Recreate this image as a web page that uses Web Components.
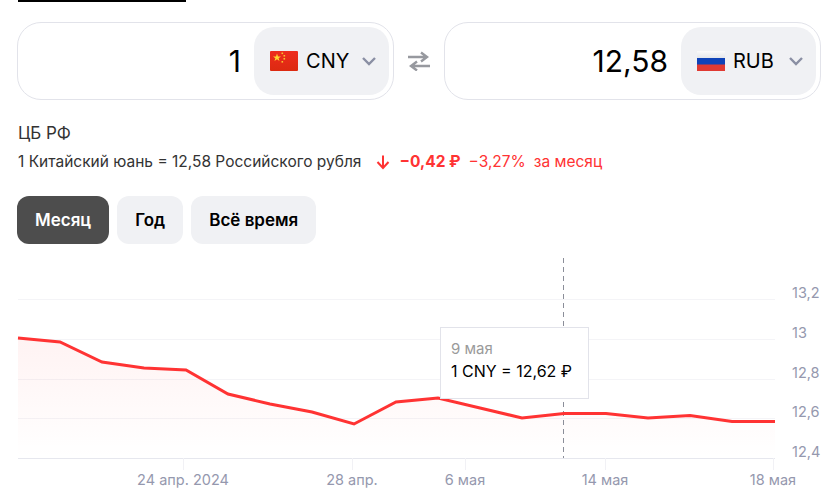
<!DOCTYPE html>
<html lang="ru">
<head>
<meta charset="utf-8">
<title>CNY RUB</title>
<style>
    html, body {
        margin: 0;
        background: #fff;
        font-family: Inter, Roboto, "DejaVu Sans", sans-serif;
        color: #000;
        overflow: hidden;
    }
    .page {
        width: 837px;
        height: 502px;
        box-sizing: border-box;
        padding: 0 16px 0 17px;
    }
</style>
</head>
<body>
<div class="page">
    <top-rule></top-rule>
    <fx-converter>
        <fx-field value="1" code="CNY" flag="cn"></fx-field>
        <fx-swap></fx-swap>
        <fx-field value="12,58" code="RUB" flag="ru"></fx-field>
    </fx-converter>
    <fx-rate></fx-rate>
    <fx-tabs></fx-tabs>
    <fx-chart></fx-chart>
</div>
<script>
const FLAGS = {
    cn: `<svg width="28" height="20" viewBox="0 0 28 20">
            <defs><linearGradient id="r" x1="0" y1="0" x2="0" y2="1"><stop offset="0" stop-color="#ee2c1e"/><stop offset="1" stop-color="#dc2a10"/></linearGradient></defs>
            <rect width="28" height="20" rx="1" fill="url(#r)"/>
            <polygon fill="#ffd52e" points="7,2.6 8,5.4 11,5.4 8.6,7.2 9.5,10 7,8.3 4.5,10 5.4,7.2 3,5.4 6,5.4"/>
            <rect x="11.5" y="1.5" width="1.6" height="1.6" fill="#f9c22e"/>
            <rect x="13.5" y="4" width="1.6" height="1.6" fill="#f9c22e"/>
            <rect x="13.5" y="7" width="1.6" height="1.6" fill="#f9c22e"/>
            <rect x="11.5" y="10" width="1.6" height="1.6" fill="#f9c22e"/>
        </svg>`,
    ru: `<svg width="28" height="20" viewBox="0 0 28 20">
            <defs><linearGradient id="w" x1="0" y1="0" x2="0" y2="1"><stop offset="0" stop-color="#fafafa"/><stop offset="1" stop-color="#e4e6ea"/></linearGradient></defs>
            <rect width="28" height="7" fill="url(#w)"/>
            <rect y="7" width="28" height="7" fill="#0f43b8"/>
            <rect y="13.5" width="28" height="6.5" fill="#e03a32"/>
        </svg>`
};

class TopRule extends HTMLElement {
    constructor() {
        super();
        this.attachShadow({ mode: 'open' });
        this.shadowRoot.innerHTML = `
            <style>
                :host {
                    display: block;
                    width: 168px;
                    height: 2px;
                    margin-left: 1px;
                    background: #000;
                }
            </style>
        `;
    }
}

class FxConverter extends HTMLElement {
    constructor() {
        super();
        this.attachShadow({ mode: 'open' });
        this.shadowRoot.innerHTML = `
            <style>
                :host {
                    display: flex;
                    align-items: center;
                    margin-top: 20px;
                }
            </style>
            <slot></slot>
        `;
    }
}

class FxField extends HTMLElement {
    connectedCallback() {
        if (this.shadowRoot) return;
        this.attachShadow({ mode: 'open' });
        this.shadowRoot.innerHTML = `
            <style>
                :host {
                    display: flex;
                    align-items: center;
                    justify-content: flex-end;
                    box-sizing: border-box;
                    width: 378px;
                    height: 78px;
                    padding: 4px;
                    border: 1px solid #e2e3ea;
                    border-radius: 24px;
                }
                .value {
                    font-size: 30px;
                    line-height: 68px;
                    margin-right: 13px;
                    font-weight: 400;
                }
                .pick {
                    display: flex;
                    align-items: center;
                    box-sizing: border-box;
                    width: 135px;
                    height: 68px;
                    padding-left: 16px;
                    border-radius: 20px;
                    background: #f0f1f4;
                }
                svg { display: block; flex: none; }
                .code {
                    font-size: 20px;
                    margin-left: 8px;
                    font-weight: 400;
                    width: 50px;
                }
                .chev { margin-left: 5px; }
            </style>
            <div class="value">${this.getAttribute('value')}</div>
            <div class="pick">
                ${FLAGS[this.getAttribute('flag')]}
                <span class="code">${this.getAttribute('code')}</span>
                <svg class="chev" width="16" height="10" viewBox="0 0 16 10"><path d="M2 2l6 6 6-6" fill="none" stroke="#8a8fa3" stroke-width="2.4"/></svg>
            </div>
        `;
    }
}

class FxSwap extends HTMLElement {
    constructor() {
        super();
        this.attachShadow({ mode: 'open' });
        this.shadowRoot.innerHTML = `
            <style>
                :host {
                    display: flex;
                    justify-content: center;
                    width: 50px;
                }
                svg { display: block; }
            </style>
            <svg width="24" height="20" viewBox="0 0 24 20">
                <path d="M1 6h18M14 1.5l6 4.5-6 4.5" fill="none" stroke="#97999f" stroke-width="2.4"/>
                <path d="M23 15H5M10 10.5L4 15l6 4.5" fill="none" stroke="#97999f" stroke-width="2.4"/>
            </svg>
        `;
    }
}

class FxRate extends HTMLElement {
    constructor() {
        super();
        this.attachShadow({ mode: 'open' });
        this.shadowRoot.innerHTML = `
            <style>
                :host {
                    display: block;
                    margin-top: 21px;
                    margin-left: 1px;
                    color: #333;
                }
                .src { font-size: 17px; line-height: 24px; }
                .line {
                    display: flex;
                    align-items: center;
                    margin-top: 5px;
                    font-size: 15.5px;
                    line-height: 24px;
                    white-space: nowrap;
                }
                .red { color: #ff3333; }
                .arrow { margin: 0 8px 0 14px; display: block; }
                .delta { font-weight: 700; margin-right: 8px; }
                .pct { margin-right: 8px; }
            </style>
            <div class="src">ЦБ РФ</div>
            <div class="line">
                <span>1 Китайский юань = 12,58 Российского рубля</span>
                <svg class="arrow" width="16" height="16" viewBox="0 0 16 16"><path d="M8 1.5v12M2.5 8l5.5 6 5.500-6" fill="none" stroke="#ff3333" stroke-width="2"/></svg>
                <span class="red delta">−0,42 ₽</span>
                <span class="red pct">−3,27%</span>
                <span class="red">за месяц</span>
            </div>
        `;
    }
}

class FxTabs extends HTMLElement {
    constructor() {
        super();
        this.attachShadow({ mode: 'open' });
        this.shadowRoot.innerHTML = `
            <style>
                :host {
                    display: flex;
                    gap: 8px;
                    margin-top: 22px;
                }
                button {
                    height: 48px;
                    padding: 0 18px;
                    border: 0;
                    border-radius: 12px;
                    background: #f0f1f4;
                    color: #000;
                    font: 600 17px Inter, sans-serif;
                }
                .on { background: #4d4d4d; color: #fff; }
            </style>
            <button class="on">Месяц</button>
            <button>Год</button>
            <button>Всё время</button>
        `;
    }
}

class FxChart extends HTMLElement {
    constructor() {
        super();
        this.attachShadow({ mode: 'open' });
        const pts = [[1,80],[43,84],[85,104],[127,110],[169,112],[211,136],[253,146],[295,154],[337,166],[379,144],[421,140],[463,150],[505,160],[547,155.500],[589,155.500],[631,160],[673,157.500],[715,163.500],[758,163.500]];
        const line = pts.map(p => p.join(',')).join(' ');
        const grid = [41, 81, 121, 160].map(y => `<line x1="1" x2="758" y1="${y}.5" y2="${y}.5" stroke="#f4f4f7"/>`).join('');
        const yLabels = [['13,2', 40], ['13', 80], ['12,8', 120], ['12,6', 159], ['12,4', 199]]
            .map(l => `<text x="775" y="${l[1]}" class="ax">${l[0]}</text>`).join('');
        const xLabels = [['24 апр. 2024', 166], ['28 апр.', 335], ['6 мая', 448], ['14 мая', 588], ['18 мая', 756]]
            .map(l => `<line x1="${l[1]}.5" x2="${l[1]}.5" y1="200" y2="212" stroke="#f1f1f5"/><text x="${l[1]}" y="227" text-anchor="middle" class="ax">${l[0]}</text>`).join('');
        this.shadowRoot.innerHTML = `
            <style>
                :host {
                    display: block;
                    position: relative;
                    height: 244px;
                    margin-top: 14px;
                }
                svg { display: block; }
                .ax { font-size: 14.5px; fill: #9598ae; font-family: Inter, sans-serif; }
                .tip {
                    position: absolute;
                    left: 423px;
                    top: 69px;
                    box-sizing: border-box;
                    width: 149px;
                    height: 72px;
                    padding: 10px 10px;
                    border: 1px solid #e2e3ea;
                    background: #fff;
                    font-size: 16px;
                    line-height: 22px;
                    white-space: nowrap;
                }
                .tip div:first-child { color: #9a9a9a; font-size: 15px; }
            </style>
            <svg width="820" height="244" viewBox="0 0 820 244">
                <defs>
                    <linearGradient id="fill" x1="0" y1="0" x2="0" y2="1">
                        <stop offset="0" stop-color="#ff3333" stop-opacity=".06"/>
                        <stop offset="1" stop-color="#ff3333" stop-opacity="0"/>
                    </linearGradient>
                </defs>
                ${grid}
                <polygon points="1,200 ${line} 758,200" fill="url(#fill)"/>
                <line x1="1" x2="758" y1="200.500" y2="200.500" stroke="#e6e7ee"/>
                <line x1="546.500" x2="546.500" y1="0" y2="200" stroke="#8b8e99" stroke-dasharray="5 4"/>
                <polyline points="${line}" fill="none" stroke="#ff3333" stroke-width="3"/>
                ${yLabels}
                ${xLabels}
            </svg>
            <div class="tip">
                <div>9 мая</div>
                <div>1 CNY = 12,62 ₽</div>
            </div>
        `;
    }
}

customElements.define('top-rule', TopRule);
customElements.define('fx-converter', FxConverter);
customElements.define('fx-field', FxField);
customElements.define('fx-swap', FxSwap);
customElements.define('fx-rate', FxRate);
customElements.define('fx-tabs', FxTabs);
customElements.define('fx-chart', FxChart);
</script>
</body>
</html>
